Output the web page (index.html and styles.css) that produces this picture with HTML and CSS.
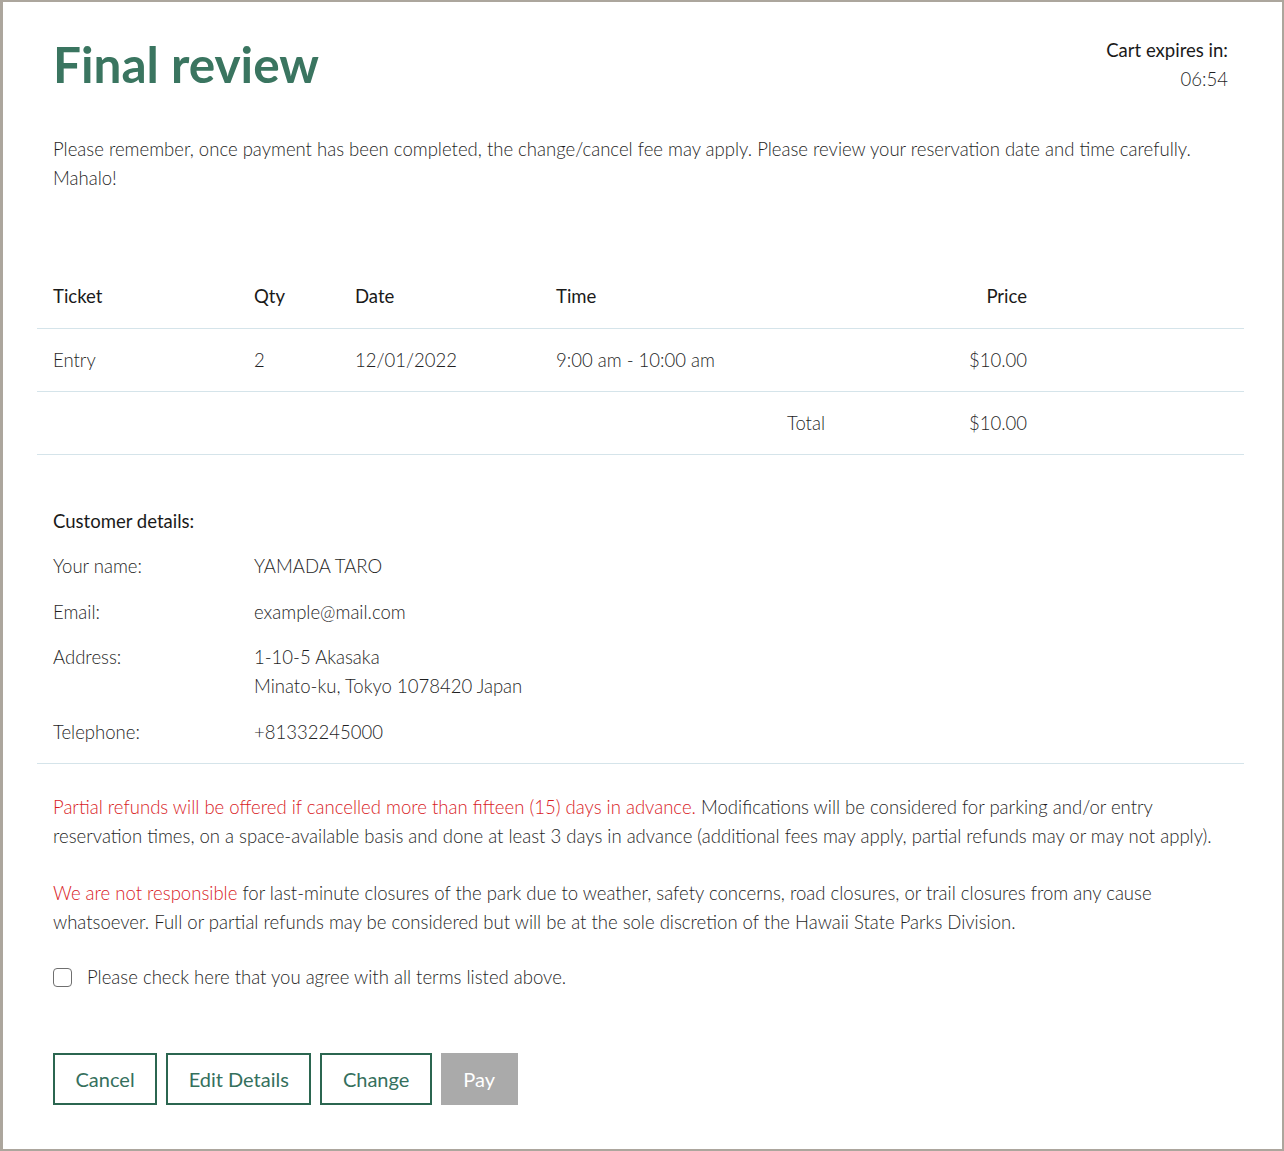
FILE: index.html
```html
<!DOCTYPE html>
<html lang="en">
<head>
<meta charset="utf-8">
<title>Final review</title>
<link rel="stylesheet" href="styles.css">
</head>
<body>
<div class="page">
  <header class="header">
    <h1 class="title">Final review</h1>
    <div class="timer">
      <div class="timer-label">Cart expires in:</div>
      <div class="timer-value">06:54</div>
    </div>
  </header>

  <p class="intro">Please remember, once payment has been completed, the change/cancel fee may apply. Please review your reservation date and time carefully. Mahalo!</p>

  <table class="tickets">
    <colgroup>
      <col class="c-ticket"><col class="c-qty"><col class="c-date"><col class="c-time"><col class="c-price"><col class="c-rest">
    </colgroup>
    <thead>
      <tr><th>Ticket</th><th>Qty</th><th>Date</th><th>Time</th><th class="right">Price</th><th></th></tr>
    </thead>
    <tbody>
      <tr><td>Entry</td><td>2</td><td>12/01/2022</td><td>9:00 am - 10:00 am</td><td class="right">$10.00</td><td></td></tr>
      <tr><td></td><td></td><td></td><td class="right">Total</td><td class="right">$10.00</td><td></td></tr>
    </tbody>
  </table>

  <section class="customer">
    <h2 class="customer-title">Customer details:</h2>
    <dl class="details">
      <div class="row"><dt>Your name:</dt><dd>YAMADA TARO</dd></div>
      <div class="row"><dt>Email:</dt><dd>example@mail.com</dd></div>
      <div class="row"><dt>Address:</dt><dd>1-10-5 Akasaka<br>Minato-ku, Tokyo 1078420 Japan</dd></div>
      <div class="row"><dt>Telephone:</dt><dd>+81332245000</dd></div>
    </dl>
  </section>

  <section class="terms">
    <p><span class="red">Partial refunds will be offered if cancelled more than fifteen (15) days in advance.</span> Modifications will be considered for parking and/or entry reservation times, on a space-available basis and done at least 3 days in advance (additional fees may apply, partial refunds may or may not apply).</p>
    <p class="last"><span class="red">We are not responsible</span> for last-minute closures of the park due to weather, safety concerns, road closures, or trail closures from any cause whatsoever. Full or partial refunds may be considered but will be at the sole discretion of the Hawaii State Parks Division.</p>
    <label class="agree"><span class="box"></span><span>Please check here that you agree with all terms listed above.</span></label>
  </section>

  <div class="actions">
    <button class="btn">Cancel</button>
    <button class="btn">Edit Details</button>
    <button class="btn">Change</button>
    <button class="btn btn-disabled">Pay</button>
  </div>
</div>
</body>
</html>
```

FILE: styles.css
```css
* { box-sizing: border-box; }

html, body {
  margin: 0;
  padding: 0;
  background: #fff;
}

body {
  font-family: Lato, "Open Sans", Arial, sans-serif;
  font-size: 18.55px;
  font-weight: 300;
  line-height: 29px;
  color: #1f1f1f;
}

.page {
  width: 1284px;
  height: 1151px;
  border: 2px solid #aca69d;
  border-left-width: 3px;
  padding: 0 38px 0 34px;
  overflow: hidden;
}

.header {
  display: flex;
  justify-content: space-between;
  align-items: flex-start;
  padding: 32px 16px 0;
}

.title {
  margin: 0;
  font-size: 49.5px;
  line-height: 60px;
  font-weight: 700;
  color: #3a7560;
}

.timer {
  text-align: right;
  padding-top: 2px;
}

.timer-label {
  font-weight: 400;
  color: #1a1a1a;
}

.timer-value {
  font-weight: 300;
}

.intro {
  margin: 41px 0 0;
  padding: 0 16px;
}

.tickets {
  width: 1207px;
  margin-top: 72px;
  border-collapse: collapse;
  table-layout: fixed;
}

.c-ticket { width: 201px; }
.c-qty { width: 101px; }
.c-date { width: 201px; }
.c-time { width: 301px; }
.c-price { width: 202px; }
.c-rest { width: 201px; }

.tickets th,
.tickets td {
  text-align: left;
  padding: 17px 16px;
  line-height: 28px;
  height: 63px;
  border-bottom: 1px solid #d5e4ea;
  white-space: nowrap;
}

.tickets th {
  font-weight: 400;
  color: #1a1a1a;
}

.tickets .right {
  text-align: right;
}

.customer {
  padding: 52px 16px 16px;
  border-bottom: 1px solid #d5e4ea;
}

.customer-title {
  margin: 0;
  font-size: 18.55px;
  line-height: 29px;
  font-weight: 400;
  color: #1a1a1a;
}

.details {
  margin: 16.5px 0 0;
  display: flex;
  flex-direction: column;
  gap: 16.5px;
}

.row {
  display: flex;
}

.row dt {
  width: 201px;
  flex: none;
}

.row dd {
  margin: 0;
}

.terms {
  padding: 29px 16px 0;
}

.terms p {
  margin: 0 0 28px;
}

.terms p.last {
  margin-bottom: 26px;
}

.red {
  color: #d91c1f;
}

.agree {
  display: flex;
  align-items: center;
  gap: 15px;
}

.box {
  width: 19px;
  height: 19px;
  border: 1.5px solid #6f6f6f;
  border-radius: 4px;
  flex: none;
}

.actions {
  display: flex;
  gap: 9px;
  padding: 61px 16px 0;
}

.btn {
  font-family: Lato, "Open Sans", Arial, sans-serif;
  font-size: 20px;
  font-weight: 400;
  line-height: 24px;
  padding: 12px 20.5px;
  height: 52px;
  border: 2px solid #2b6650;
  background: #fff;
  color: #35705d;
  border-radius: 0;
}

.btn-disabled {
  background: #aaaaaa;
  border-color: #aaaaaa;
  color: #fff;
}
```
